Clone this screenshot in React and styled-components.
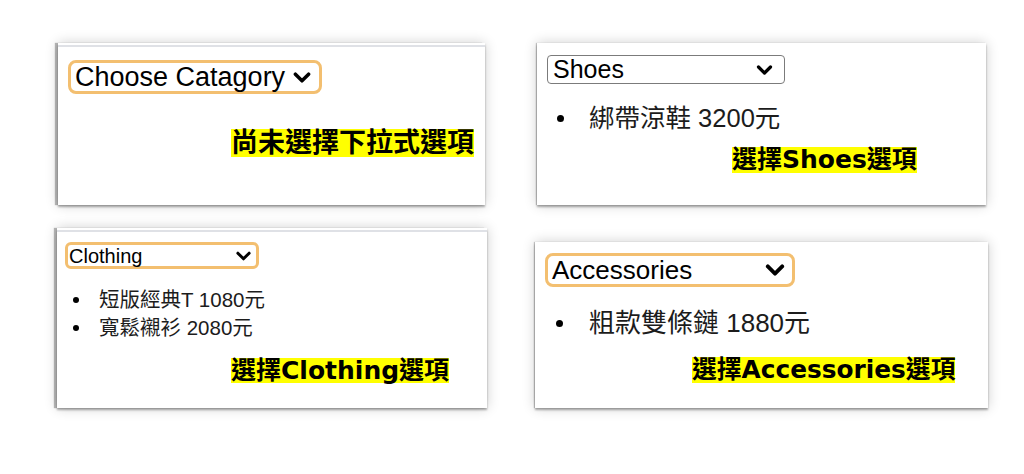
import React from "react";
import styled, { createGlobalStyle } from "styled-components";

const GlobalStyle = createGlobalStyle`
  html, body { margin: 0; padding: 0; background: #ffffff; }
  body {
    width: 1024px;
    height: 474px;
    overflow: hidden;
    font-family: "Liberation Sans", "Noto Sans CJK TC", sans-serif;
  }
`;

const Page = styled.main`
  display: grid;
  grid-template-columns: 430px 453px;
  grid-template-rows: 162px 180px;
  column-gap: 48px;
  row-gap: 23px;
  align-items: end;
  padding: 43px 0 0 57px;
`;

const Panel = styled.section`
  box-sizing: border-box;
  width: ${(p) => p.$w}px;
  height: ${(p) => p.$h}px;
  margin-left: ${(p) => p.$ml}px;
  padding-top: ${(p) => p.$pt}px;
  background: #ffffff;
  display: flex;
  flex-direction: column;
  align-items: flex-start;
  box-shadow: ${(p) =>
    [
      p.$topLine ? "inset 0 2px 0 #ffffff, inset 0 4px 0 #dfe1e6" : null,
      p.$leftDark ? "-3px 0 1px rgba(0,0,0,0.28)" : "-1px 0 1px rgba(0,0,0,0.2)",
      "0 2px 2px rgba(0,0,0,0.32)",
      "0 0 12px rgba(0,0,0,0.2)",
    ]
      .filter(Boolean)
      .join(", ")};
`;

const Select = styled.div`
  box-sizing: border-box;
  display: flex;
  align-items: center;
  justify-content: space-between;
  width: ${(p) => p.$w}px;
  height: ${(p) => p.$h}px;
  margin-left: ${(p) => p.$ml}px;
  padding: 0 ${(p) => p.$pr}px 0 ${(p) => p.$pl}px;
  border: ${(p) => p.$bw}px solid ${(p) => (p.$focus ? "#f3bf70" : "#7b7b7b")};
  border-radius: ${(p) => p.$r}px;
  background: #ffffff;
  font-family: "Liberation Sans", Arial, sans-serif;
  font-size: ${(p) => p.$fs}px;
  line-height: 1;
  color: #000000;
  white-space: nowrap;
`;

const Chevron = styled.svg`
  flex: none;
  display: block;
`;

const ItemList = styled.ul`
  list-style: none;
  margin: ${(p) => p.$mt}px 0 0 ${(p) => p.$ml}px;
  padding: 0;
  font-family: "Liberation Sans", "Noto Sans CJK TC", sans-serif;
  font-size: ${(p) => p.$fs}px;
  line-height: ${(p) => p.$lh}px;
  color: #1c1c1c;
`;

const Item = styled.li`
  display: flex;
  align-items: center;
  gap: ${(p) => p.$gap}px;
  white-space: nowrap;
  &::before {
    content: "";
    flex: none;
    width: ${(p) => p.$dot}px;
    height: ${(p) => p.$dot}px;
    border-radius: 50%;
    background: #000000;
  }
`;

const Highlight = styled.p`
  margin: ${(p) => p.$mt}px 0 0 ${(p) => p.$ml}px;
  display: inline-block;
  background: #ffff00;
  color: #000000;
  font-family: "DejaVu Sans", "Noto Sans CJK TC", sans-serif;
  font-weight: 700;
  font-size: ${(p) => p.$fs}px;
  line-height: ${(p) => p.$h}px;
  height: ${(p) => p.$h}px;
  white-space: nowrap;
`;

const ArrowDown = ({ w, h }) => (
  <Chevron width={w} height={h} viewBox="0 0 16 10">
    <polyline
      points="2,2 8,8 14,2"
      fill="none"
      stroke="#000"
      strokeWidth="3.2"
      strokeLinecap="round"
      strokeLinejoin="round"
    />
  </Chevron>
);

const panels = [
  {
    key: "none",
    panel: { w: 427, h: 162, ml: 1, pt: 17, topLine: true, leftDark: true },
    select: { label: "Choose Catagory", ml: 10, w: 254, h: 34, bw: 3, focus: true, r: 8, fs: 27, pl: 4, pr: 8, cw: 18, ch: 11 },
    list: null,
    hl: { text: "尚未選擇下拉式選項", mt: 35, ml: 173, fs: 27, h: 28 },
  },
  {
    key: "shoes",
    panel: { w: 449, h: 162, ml: 2, pt: 12, topLine: false, leftDark: false },
    select: { label: "Shoes", ml: 10, w: 238, h: 29, bw: 1, focus: false, r: 4, fs: 25, pl: 5, pr: 11, cw: 17, ch: 10 },
    list: { mt: 19, ml: 20, fs: 25.5, lh: 30, dot: 7, gap: 25, items: ["綁帶涼鞋 3200元"] },
    hl: { text: "選擇Shoes選項", mt: 14, ml: 195, fs: 25, h: 26 },
  },
  {
    key: "clothing",
    panel: { w: 430, h: 180, ml: 0, pt: 14, topLine: true, leftDark: true },
    select: { label: "Clothing", ml: 8, w: 194, h: 27, bw: 3, focus: true, r: 6, fs: 20, pl: 1, pr: 5, cw: 15, ch: 10 },
    list: { mt: 17, ml: 16, fs: 20.5, lh: 28, dot: 6, gap: 20, items: ["短版經典T 1080元", "寬鬆襯衫 2080元"] },
    hl: { text: "選擇Clothing選項", mt: 16, ml: 174, fs: 25, h: 25 },
  },
  {
    key: "accessories",
    panel: { w: 453, h: 166, ml: 0, pt: 11, topLine: false, leftDark: false },
    select: { label: "Accessories", ml: 10, w: 250, h: 34, bw: 3, focus: true, r: 8, fs: 26, pl: 4, pr: 7, cw: 20, ch: 12 },
    list: { mt: 20, ml: 21, fs: 26, lh: 32, dot: 7, gap: 26, items: ["粗款雙條鏈 1880元"] },
    hl: { text: "選擇Accessories選項", mt: 18, ml: 157, fs: 24.8, h: 26 },
  },
];

export default function App() {
  return (
    <>
      <GlobalStyle />
      <Page>
        {panels.map(({ key, panel, select, list, hl }) => (
          <Panel
            key={key}
            $w={panel.w}
            $h={panel.h}
            $ml={panel.ml}
            $pt={panel.pt}
            $topLine={panel.topLine}
            $leftDark={panel.leftDark}
          >
            <Select
              role="combobox"
              $ml={select.ml}
              $w={select.w}
              $h={select.h}
              $bw={select.bw}
              $focus={select.focus}
              $r={select.r}
              $fs={select.fs}
              $pl={select.pl}
              $pr={select.pr}
            >
              <span>{select.label}</span>
              <ArrowDown w={select.cw} h={select.ch} />
            </Select>
            {list && (
              <ItemList $mt={list.mt} $ml={list.ml} $fs={list.fs} $lh={list.lh}>
                {list.items.map((it) => (
                  <Item key={it} $dot={list.dot} $gap={list.gap}>
                    {it}
                  </Item>
                ))}
              </ItemList>
            )}
            <Highlight $mt={hl.mt} $ml={hl.ml} $fs={hl.fs} $h={hl.h}>
              {hl.text}
            </Highlight>
          </Panel>
        ))}
      </Page>
    </>
  );
}
